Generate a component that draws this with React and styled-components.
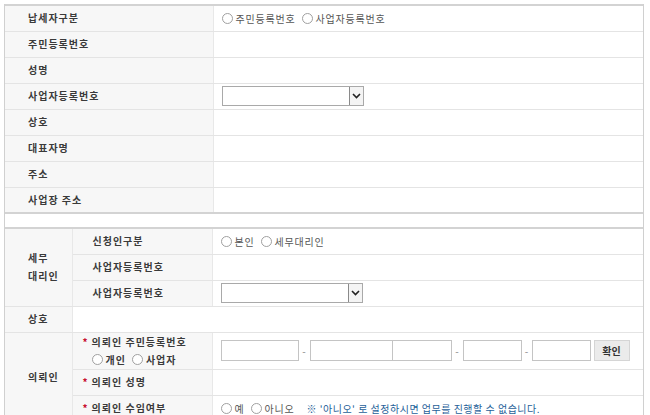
import React from 'react';
import styled, { createGlobalStyle } from 'styled-components';

const GlobalStyle = createGlobalStyle`
  body {
    margin: 0;
    background: #fff;
    font-family: "Noto Sans CJK KR", "Noto Sans", sans-serif;
  }
`

const Frame = styled.div`
  margin: 4px 0 0 4px;
  width: 640px;
  height: 411px;
  border-left: 1px solid #d0d0d0;
  border-right: 1px solid #d0d0d0;
  box-sizing: border-box;
  overflow: hidden;
`
const Table = styled.table`
  width: 100%;
  table-layout: fixed;
  border-collapse: collapse;
  border-top: 2px solid #d3d3d3;
  border-bottom: ${p => p.$last ? 'none' : '2px solid #d3d3d3'};
  margin-bottom: ${p => p.$gap || 0}px;
`
const Row = styled.tr`
  height: ${p => p.$h || 26}px;
`
const Label = styled.th`
  background: #f7f7f7;
  padding: 0 0 0 ${p => p.$indent ?? 23}px;
  text-align: left;
  vertical-align: middle;
  font-size: 10px;
  font-weight: 700;
  letter-spacing: 1px;
  line-height: 18px;
  color: #3a3a3a;
  border-bottom: 1px solid #e4e4e4;
  border-right: 1px solid #e8e8e8;
  white-space: nowrap;
`
const Value = styled.td`
  padding: 0 0 0 8px;
  vertical-align: middle;
  font-size: 10px;
  letter-spacing: 0.8px;
  color: #555;
  border-bottom: 1px solid #e4e4e4;
  white-space: nowrap;
`
const Star = styled.span`
  color: #c8102e;
  margin-right: 3px;
  font-weight: 700;
`
const RadioGroup = styled.div`
  display: flex;
  align-items: center;
  margin-left: ${p => p.$indent || 0}px;
`
const RadioItem = styled.span`
  display: inline-flex;
  align-items: center;
  margin-right: 6px;
  font-weight: ${p => p.$bold ? 700 : 400};
`
const Circle = styled.span`
  width: 9px;
  height: 9px;
  border: 1px solid #a0a0a0;
  border-radius: 50%;
  background: #fff;
  margin-right: 3px;
  flex: none;
`
const Note = styled.span`
  margin-left: 6px;
  letter-spacing: 0.5px;
  color: #1f5f99;
`
const SelectBox = styled.div`
  width: 142px;
  height: 20px;
  border: 1px solid #a9a9a9;
  box-sizing: border-box;
  display: flex;
  justify-content: flex-end;
  background: #fff;
`
const SelectButton = styled.span`
  width: 14px;
  height: 100%;
  border-left: 1px solid #8a8a8a;
  box-sizing: border-box;
  display: flex;
  align-items: center;
  justify-content: center;
  background: #f4f4f4;
`
const InputRow = styled.div`
  display: flex;
  align-items: center;
  letter-spacing: 0;
`
const TextInput = styled.input`
  width: ${p => p.$w}px;
  height: 21px;
  box-sizing: border-box;
  border: 1px solid #c4c4c4;
  border-left-width: ${p => p.$joined ? 0 : 1}px;
  padding: 0;
  margin: 0;
  background: #fff;
`
const Dash = styled.span`
  width: ${p => p.$w || 11}px;
  text-align: center;
  color: #888;
`
const ConfirmButton = styled.button`
  margin-left: 3px;
  width: 36px;
  height: 21px;
  padding: 0;
  border: 1px solid #d5d5d5;
  background: #ebebeb;
  font-family: inherit;
  font-size: 10px;
  font-weight: 700;
  color: #333;
`

const Radios = ({items, indent, bold}) => (
    <RadioGroup $indent={indent}>
        {items.map(t => <RadioItem key={t} $bold={bold}><Circle/>{t}</RadioItem>)}
    </RadioGroup>
)

const Select = () => (
    <SelectBox>
        <SelectButton>
            <svg width="9" height="6" viewBox="0 0 9 6">
                <path d="M1 1 L4.5 4.5 L8 1" fill="none" stroke="#222" strokeWidth="1.6"/>
            </svg>
        </SelectButton>
    </SelectBox>
)

export default function App(){
    const basic = ['주민등록번호', '성명', '사업자등록번호', '상호', '대표자명', '주소', '사업장 주소']
    return(
        <>
            <GlobalStyle/>
            <Frame>
                <Table $gap={13}>
                    <colgroup><col style={{width: 208}}/><col/></colgroup>
                    <tbody>
                        <Row>
                            <Label>납세자구분</Label>
                            <Value><Radios items={['주민등록번호', '사업자등록번호']}/></Value>
                        </Row>
                        {basic.map((l, i) => (
                            <Row key={i}>
                                <Label>{l}</Label>
                                <Value>{l === '사업자등록번호' && <Select/>}</Value>
                            </Row>
                        ))}
                    </tbody>
                </Table>
                <Table $last>
                    <colgroup><col style={{width: 67}}/><col style={{width: 140}}/><col/></colgroup>
                    <tbody>
                        <Row>
                            <Label rowSpan={3}>세무<br/>대리인</Label>
                            <Label $indent={20}>신청인구분</Label>
                            <Value><Radios items={['본인', '세무대리인']}/></Value>
                        </Row>
                        <Row>
                            <Label $indent={20}>사업자등록번호</Label>
                            <Value/>
                        </Row>
                        <Row>
                            <Label $indent={20}>사업자등록번호</Label>
                            <Value><Select/></Value>
                        </Row>
                        <Row $h={26}>
                            <Label>상호</Label>
                            <Value colSpan={2}/>
                        </Row>
                        <Row $h={37}>
                            <Label rowSpan={3}>의뢰인</Label>
                            <Label $indent={10}>
                                <div><Star>*</Star>의뢰인 주민등록번호</div>
                                <Radios items={['개인', '사업자']} indent={9} bold/>
                            </Label>
                            <Value>
                                <InputRow>
                                    <TextInput $w={78}/>
                                    <Dash>-</Dash>
                                    <TextInput $w={83}/>
                                    <TextInput $w={59} $joined/>
                                    <Dash>-</Dash>
                                    <TextInput $w={59}/>
                                    <Dash $w={10}>-</Dash>
                                    <TextInput $w={59}/>
                                    <ConfirmButton>확인</ConfirmButton>
                                </InputRow>
                            </Value>
                        </Row>
                        <Row>
                            <Label $indent={10}><Star>*</Star>의뢰인 성명</Label>
                            <Value/>
                        </Row>
                        <Row>
                            <Label $indent={10}><Star>*</Star>의뢰인 수임여부</Label>
                            <Value>
                                <RadioGroup>
                                    <RadioItem><Circle/>예</RadioItem>
                                    <RadioItem><Circle/>아니오</RadioItem>
                                    <Note>※ '아니오' 로 설정하시면 업무를 진행할 수 없습니다.</Note>
                                </RadioGroup>
                            </Value>
                        </Row>
                    </tbody>
                </Table>
            </Frame>
        </>
    )
}
